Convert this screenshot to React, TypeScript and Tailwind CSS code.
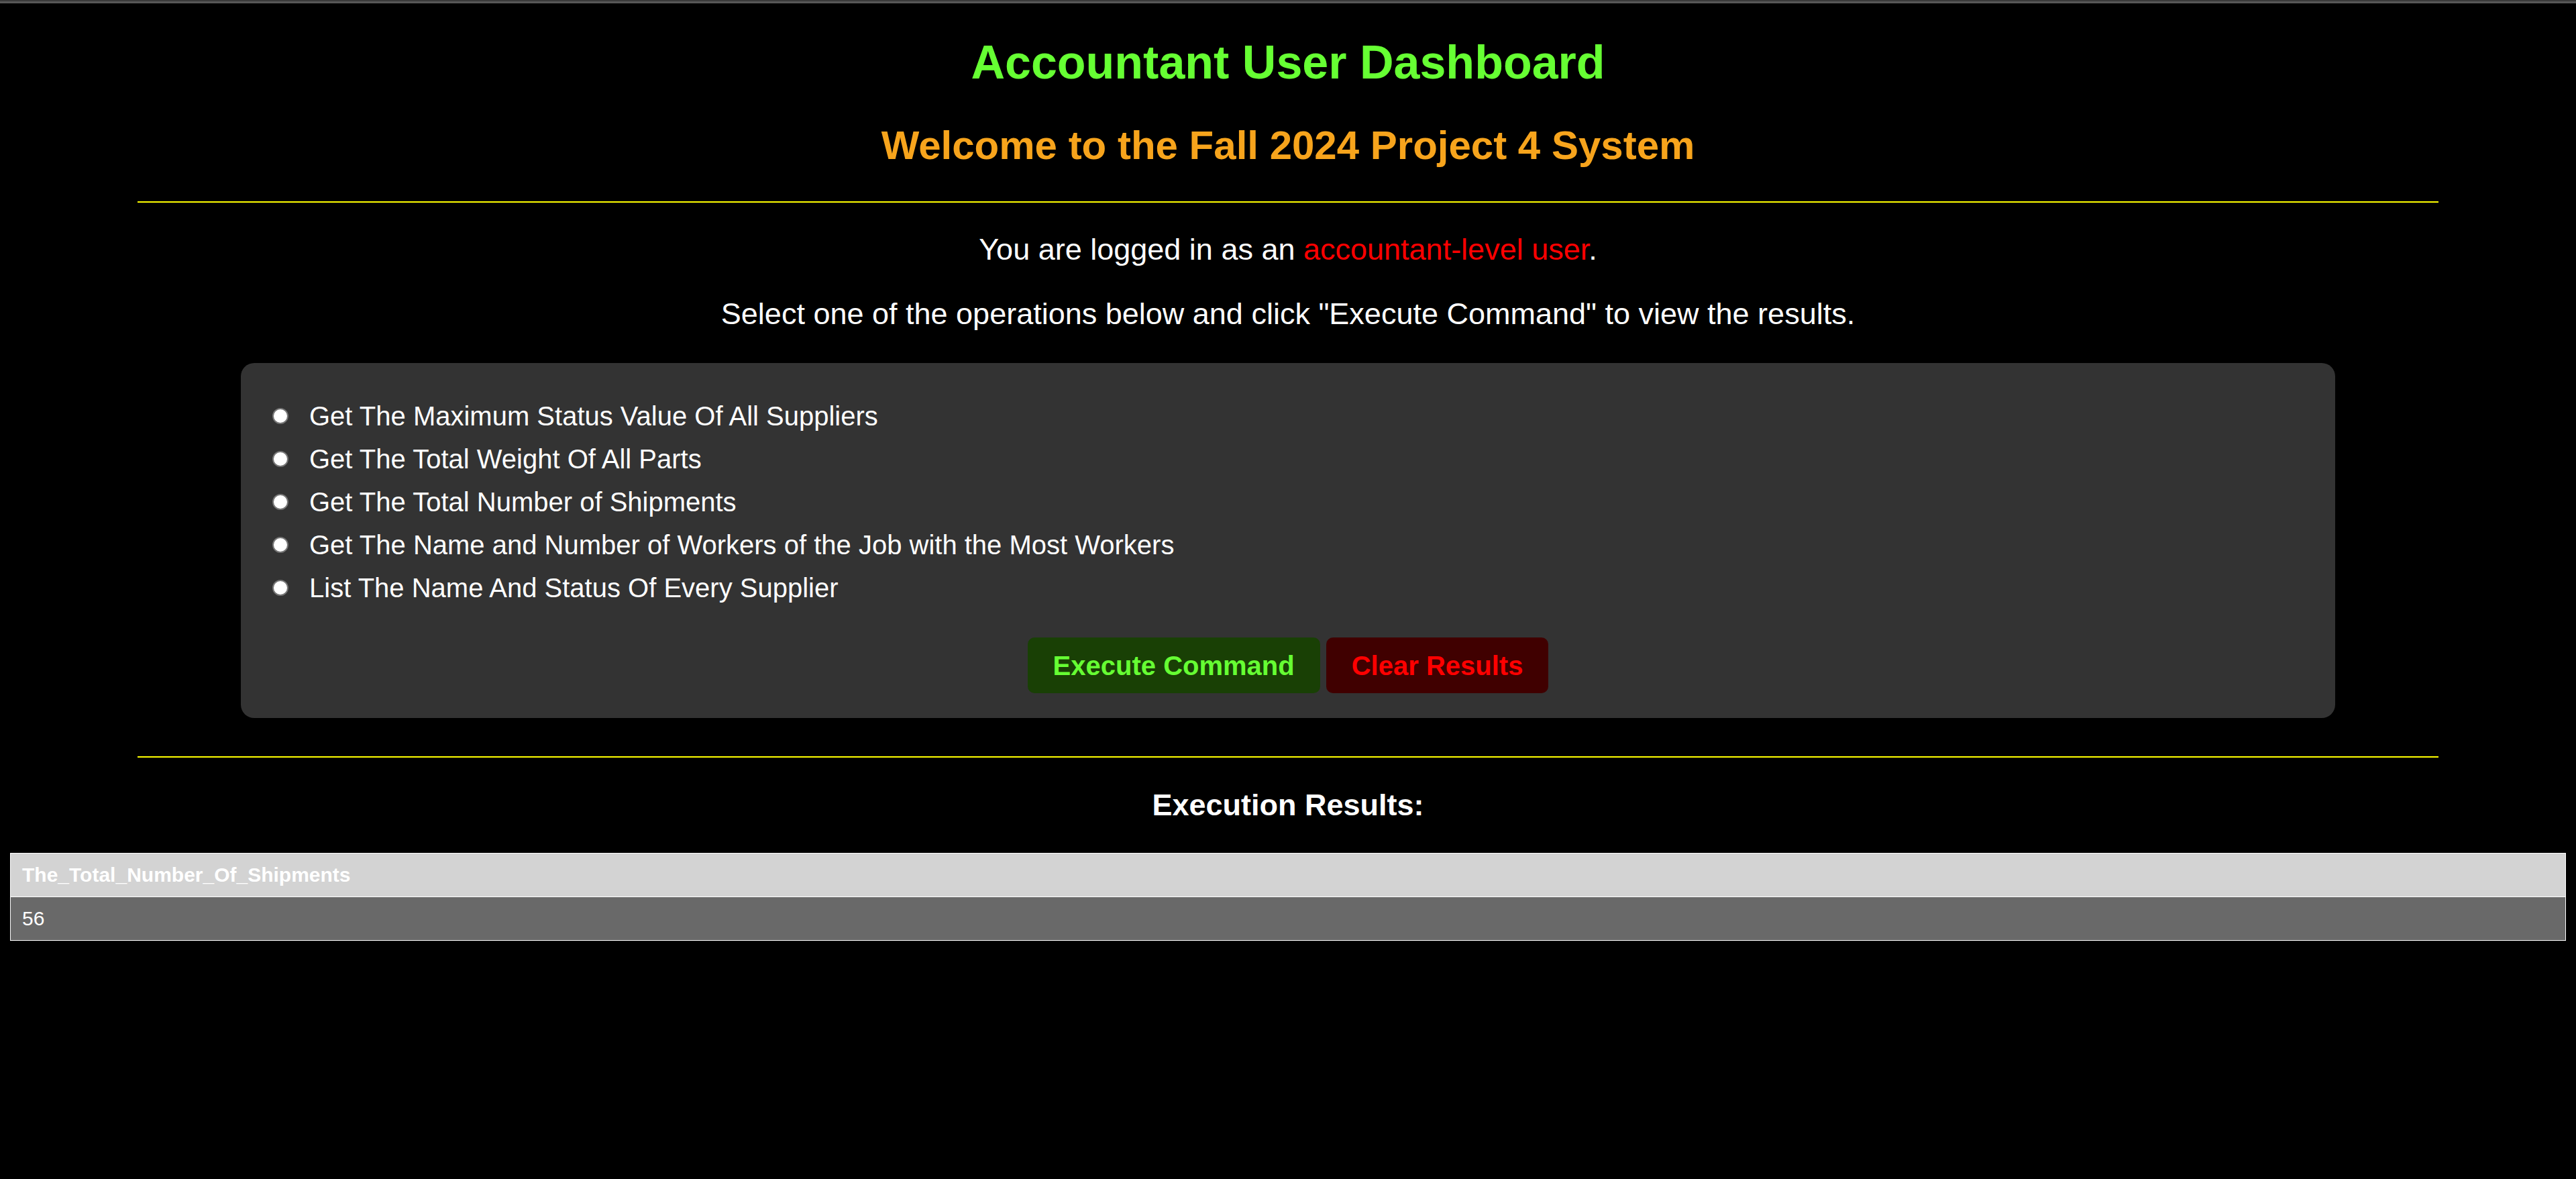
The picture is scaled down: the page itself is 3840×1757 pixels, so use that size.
import React from 'react';

const operations = [
  'Get The Maximum Status Value Of All Suppliers',
  'Get The Total Weight Of All Parts',
  'Get The Total Number of Shipments',
  'Get The Name and Number of Workers of the Job with the Most Workers',
  'List The Name And Status Of Every Supplier',
];

const App: React.FC = () => {
  return (
    <div className="min-h-screen bg-black text-white font-['Liberation_Sans',Arial,sans-serif]">
      {/* top strip */}
      <div className="h-[5px] border-t-2 border-[#3a3a3a] bg-[#575757]"></div>

      <h1 className="mt-[48px] text-center text-[70px] leading-[80px] font-bold text-[#66ff33]">
        Accountant User Dashboard
      </h1>
      <h2 className="mt-[49px] text-center text-[60px] leading-[69px] font-bold text-[#f7a41c]">
        Welcome to the Fall 2024 Project 4 System
      </h2>

      <div className="mx-auto mt-[49px] h-[2px] w-[3430px] bg-[#ffff00]"></div>

      <p className="mt-[44px] text-center text-[45px] leading-[52px]">
        You are logged in as an <span className="text-[#ff0000]">accountant-level user</span>.
      </p>
      <p className="mt-[44px] text-center text-[45px] leading-[52px]">
        Select one of the operations below and click "Execute Command" to view the results.
      </p>

      {/* Operations panel */}
      <div className="mx-auto mt-[47px] w-[3122px] rounded-[20px] bg-[#333333] pt-[47px] pb-[37px]">
        <div className="flex flex-col pl-[47px]">
          {operations.map((op) => (
            <label key={op} className="flex h-[64px] items-center">
              <span className="h-[24px] w-[24px] rounded-full border-2 border-[#767676] bg-white"></span>
              <span className="ml-[31px] text-[40px] leading-[46px]">{op}</span>
            </label>
          ))}
        </div>
        <div className="mt-[42px] flex justify-center gap-[9px]">
          <button className="flex h-[83px] items-center rounded-[10px] bg-[#194005] px-[38px] text-[40px] font-bold text-[#66ff33]">
            Execute Command
          </button>
          <button className="flex h-[83px] items-center rounded-[10px] bg-[#400000] px-[38px] text-[40px] font-bold text-[#ff0000]">
            Clear Results
          </button>
        </div>
      </div>

      <div className="mx-auto mt-[57px] h-[2px] w-[3430px] bg-[#ffff00]"></div>

      <h3 className="mt-[45px] text-center text-[45px] leading-[52px] font-bold">Execution Results:</h3>

      {/* Results table */}
      <div className="mt-[45px] px-[15px] pb-[60px]">
        <table className="w-full border-collapse border border-white">
          <thead>
            <tr className="bg-[#d3d3d3]">
              <th className="border border-white px-[17px] py-[15px] text-left text-[30px] leading-[34px] font-bold text-white">
                The_Total_Number_Of_Shipments
              </th>
            </tr>
          </thead>
          <tbody>
            <tr className="bg-[#696969]">
              <td className="border border-white px-[17px] py-[15px] text-[30px] leading-[34px] text-white">56</td>
            </tr>
          </tbody>
        </table>
      </div>
    </div>
  );
};

export default App;
